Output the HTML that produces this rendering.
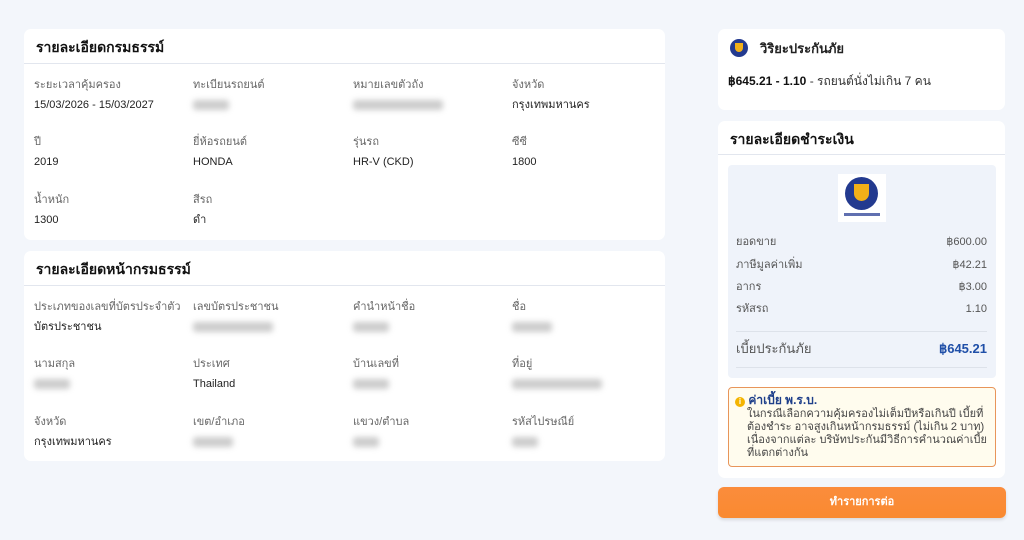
<!DOCTYPE html>
<html><head><meta charset="utf-8"><style>
*{margin:0;padding:0;box-sizing:border-box}
body{width:1024px;height:540px;overflow:hidden;background:#f3f6fb;font-family:"Liberation Sans","Noto Sans CJK SC",sans-serif;color:#333;position:relative}
.card{position:absolute;background:#fff;border-radius:7px}
.hd{height:35px;border-bottom:1px solid #e2e6ee;padding:9px 0 0 12px;font-size:14px;line-height:18px;font-weight:bold;color:#111}
.f{position:absolute;font-size:11px;line-height:14px}
.l{color:#666;height:14px}
.v{color:#222;margin-top:6px;height:14px}
.b{display:inline-block;height:10px;background:#ccc;filter:blur(3px);border-radius:3px;margin-top:8px}
.r{position:absolute;left:18px;right:18px;font-size:11px;line-height:14px;height:14px;color:#555;display:flex;justify-content:space-between}
</style></head><body>
<div class="card" style="left:24px;top:29px;width:641px;height:211px">
<div class="hd">รายละเอียดกรมธรรม์</div>
<div class="f" style="left:10px;top:49px"><div class="l">ระยะเวลาคุ้มครอง</div><div class="v">15/03/2026 - 15/03/2027</div></div>
<div class="f" style="left:169px;top:49px"><div class="l">ทะเบียนรถยนต์</div><div class="b" style="width:36px"></div></div>
<div class="f" style="left:329px;top:49px"><div class="l">หมายเลขตัวถัง</div><div class="b" style="width:90px"></div></div>
<div class="f" style="left:488px;top:49px"><div class="l">จังหวัด</div><div class="v">กรุงเทพมหานคร</div></div>
<div class="f" style="left:10px;top:106px"><div class="l">ปี</div><div class="v">2019</div></div>
<div class="f" style="left:169px;top:106px"><div class="l">ยี่ห้อรถยนต์</div><div class="v">HONDA</div></div>
<div class="f" style="left:329px;top:106px"><div class="l">รุ่นรถ</div><div class="v">HR-V (CKD)</div></div>
<div class="f" style="left:488px;top:106px"><div class="l">ซีซี</div><div class="v">1800</div></div>
<div class="f" style="left:10px;top:164px"><div class="l">น้ำหนัก</div><div class="v">1300</div></div>
<div class="f" style="left:169px;top:164px"><div class="l">สีรถ</div><div class="v">ดำ</div></div>
</div>
<div class="card" style="left:24px;top:251px;width:641px;height:210px">
<div class="hd">รายละเอียดหน้ากรมธรรม์</div>
<div class="f" style="left:10px;top:49px"><div class="l">ประเภทของเลขที่บัตรประจำตัว</div><div class="v">บัตรประชาชน</div></div>
<div class="f" style="left:169px;top:49px"><div class="l">เลขบัตรประชาชน</div><div class="b" style="width:80px"></div></div>
<div class="f" style="left:329px;top:49px"><div class="l">คำนำหน้าชื่อ</div><div class="b" style="width:36px"></div></div>
<div class="f" style="left:488px;top:49px"><div class="l">ชื่อ</div><div class="b" style="width:40px"></div></div>
<div class="f" style="left:10px;top:106px"><div class="l">นามสกุล</div><div class="b" style="width:36px"></div></div>
<div class="f" style="left:169px;top:106px"><div class="l">ประเทศ</div><div class="v">Thailand</div></div>
<div class="f" style="left:329px;top:106px"><div class="l">บ้านเลขที่</div><div class="b" style="width:36px"></div></div>
<div class="f" style="left:488px;top:106px"><div class="l">ที่อยู่</div><div class="b" style="width:90px"></div></div>
<div class="f" style="left:10px;top:164px"><div class="l">จังหวัด</div><div class="v">กรุงเทพมหานคร</div></div>
<div class="f" style="left:169px;top:164px"><div class="l">เขต/อำเภอ</div><div class="b" style="width:40px"></div></div>
<div class="f" style="left:329px;top:164px"><div class="l">แขวง/ตำบล</div><div class="b" style="width:26px"></div></div>
<div class="f" style="left:488px;top:164px"><div class="l">รหัสไปรษณีย์</div><div class="b" style="width:26px"></div></div>
</div>
<div class="card" style="left:718px;top:29px;width:287px;height:81px">
<div style="position:absolute;left:12px;top:10px;width:18px;height:18px;border-radius:50%;background:#233a8f"><div style="position:absolute;left:5px;top:4px;width:8px;height:9px;border-radius:0 0 5px 5px;background:#f3b018"></div></div>
<div style="position:absolute;left:42px;top:12px;font-size:13px;line-height:16px;font-weight:bold;color:#222">วิริยะประกันภัย</div>
<div style="position:absolute;left:10px;top:45px;font-size:12px;line-height:14px;color:#333"><b style="color:#111">฿645.21 - 1.10</b> - รถยนต์นั่งไม่เกิน 7 คน</div>
</div>
<div class="card" style="left:718px;top:121px;width:287px;height:357px">
<div class="hd" style="height:34px">รายละเอียดชำระเงิน</div>
<div style="position:absolute;left:10px;top:44px;width:268px;height:213px;background:#eff3fa;border-radius:4px"></div>
<div style="position:absolute;left:120px;top:53px;width:48px;height:48px;background:#fff">
<div style="position:absolute;left:7px;top:3px;width:33px;height:33px;border-radius:50%;background:#233a8f"><div style="position:absolute;left:9px;top:7px;width:15px;height:17px;border-radius:0 0 8px 8px;background:#f3b018"></div></div>
<div style="position:absolute;left:6px;top:39px;width:36px;height:3px;background:#6070b0"></div></div>
<div class="r" style="top:114px"><span>ยอดขาย</span><span>฿600.00</span></div>
<div class="r" style="top:137px"><span>ภาษีมูลค่าเพิ่ม</span><span>฿42.21</span></div>
<div class="r" style="top:159px"><span>อากร</span><span>฿3.00</span></div>
<div class="r" style="top:181px"><span>รหัสรถ</span><span>1.10</span></div>
<div style="position:absolute;left:18px;right:18px;top:210px;border-top:1px solid #dde2ea"></div>
<div class="r" style="top:220px;font-size:13px;line-height:16px;height:16px;align-items:center"><span>เบี้ยประกันภัย</span><b style="color:#1f4fa8">฿645.21</b></div>
<div style="position:absolute;left:18px;right:18px;top:246px;border-top:1px solid #dde2ea"></div>
<div style="position:absolute;left:10px;top:266px;width:268px;height:80px;background:#fffcee;border:1px solid #e8955a;border-radius:4px;padding:4px 8px 0 6px">
<div style="font-size:12px;line-height:16px;font-weight:bold;color:#1e3f8a"><span style="display:inline-block;width:10px;height:10px;border-radius:50%;background:#f4b400;color:#fff;font-size:8px;text-align:center;line-height:10px">i</span> ค่าเบี้ย พ.ร.บ.</div>
<div style="font-size:11px;color:#444;line-height:13px;margin-left:12px;margin-top:0">ในกรณีเลือกความคุ้มครองไม่เต็มปีหรือเกินปี เบี้ยที่ต้องชำระ อาจสูงเกินหน้ากรมธรรม์ (ไม่เกิน 2 บาท) เนื่องจากแต่ละ บริษัทประกันมีวิธีการคำนวณค่าเบี้ยที่แตกต่างกัน</div>
</div>
</div>
<div style="position:absolute;left:718px;top:487px;width:288px;height:31px;border-radius:6px;background:linear-gradient(#fb8c3c,#f98a30);color:#fff;font-size:11px;font-weight:bold;text-align:center;line-height:31px;box-shadow:0 2px 3px rgba(0,0,0,.12)">ทำรายการต่อ</div>
</body></html>
